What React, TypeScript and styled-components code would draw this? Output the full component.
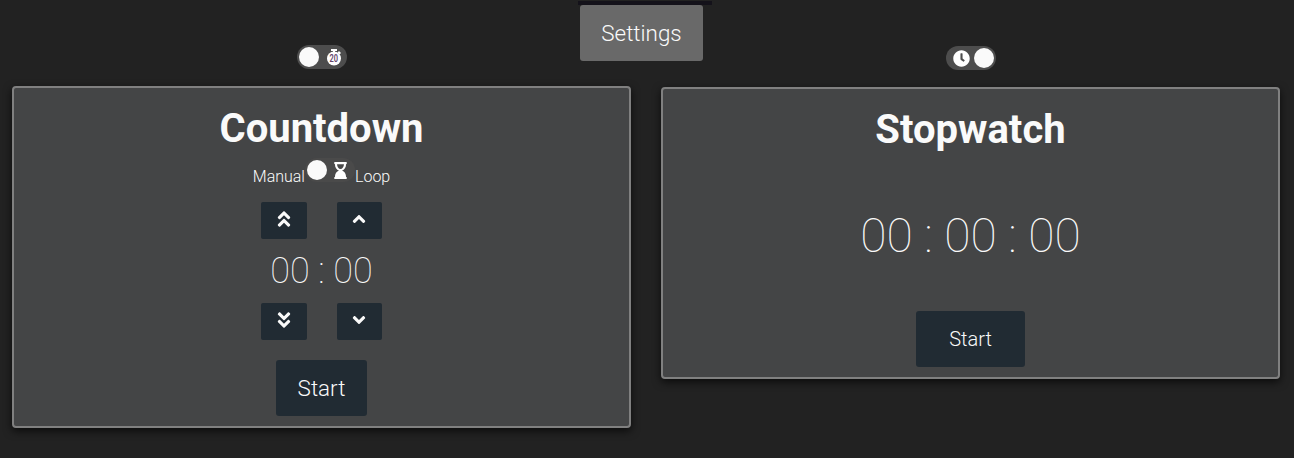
import React from "react";
import styled, { createGlobalStyle } from "styled-components";
import { FaAngleDoubleDown, FaAngleDoubleUp, FaAngleDown, FaAngleUp, FaClock, FaHourglassEnd } from "react-icons/fa";

const GlobalStyle = createGlobalStyle`
  *, *::before, *::after { box-sizing: border-box; }
  body {
    margin: 0;
    background: #222;
    color: #fafafa;
    font-family: Roboto, sans-serif;
    font-weight: 300;
    overflow: hidden;
  }
  button { font: inherit; color: inherit; border: 0; padding: 0; }
  svg { display: block; }
`;

const Page = styled.div`
  height: 458px;
  padding: 1px 14px 0 12px;
`;

const Header = styled.header`
  display: flex;
  flex-direction: column;
  height: 44px;
  width: 134px;
  margin-left: 566px;
`;

const HeaderStrip = styled.div`
  flex: none;
  height: 4px;
  background: #14121a;
`;

const SettingsButton = styled.button`
  flex: none;
  width: 123px;
  height: 56px;
  margin-left: 2px;
  border-radius: 3px;
  background: #696969;
  font-size: 22.4px;
`;

const Columns = styled.main`
  display: grid;
  grid-template-columns: 619px 619px;
  column-gap: 30px;
  align-items: start;
`;

const Column = styled.section<{ $offset?: number }>`
  display: flex;
  flex-direction: column;
  align-items: center;
  padding-top: ${(p) => p.$offset ?? 0}px;
`;

const Switch = styled.button<{ $on?: boolean; $track?: string; $inset?: number }>`
  display: flex;
  flex: none;
  flex-direction: ${(p) => (p.$on ? "row-reverse" : "row")};
  align-items: center;
  justify-content: space-between;
  width: 50px;
  height: 24px;
  padding: ${(p) => (p.$on ? `0 2px 0 ${p.$inset ?? 7}px` : `0 ${p.$inset ?? 5}px 0 2px`)};
  border-radius: 12px;
  background: ${(p) => p.$track ?? "#4d4d4d"};
`;

const Thumb = styled.span`
  width: 20px;
  height: 20px;
  border-radius: 50%;
  background: #fafafa;
`;

const Card = styled.div<{ $height: number }>`
  display: flex;
  flex-direction: column;
  align-items: center;
  width: 100%;
  height: ${(p) => p.$height}px;
  margin-top: 17px;
  padding-top: 17px;
  border: 2px solid #808080;
  border-radius: 4px;
  background: #444546;
  box-shadow: 0 3px 8px rgba(0, 0, 0, 0.7);
`;

const Title = styled.h1`
  margin: 0;
  font-size: 40px;
  font-weight: 700;
  line-height: 47px;
`;

const ModeRow = styled.div`
  display: flex;
  height: 24px;
  margin-top: 6px;
  font-size: 16px;
  line-height: 38px;
`;

const StepRow = styled.div`
  display: flex;
  gap: 30px;
`;

const StepButton = styled.button<{ $width: number }>`
  display: flex;
  align-items: center;
  justify-content: center;
  width: ${(p) => p.$width}px;
  height: 37px;
  padding: 0 ${(p) => (p.$width % 2 ? 1 : 0)}px 3px 0;
  border-radius: 2px;
  background: #212b33;
  font-size: 20px;
`;

const Spinner = styled.div`
  display: flex;
  flex-direction: column;
  align-items: center;
  margin-top: 20px;
`;

const Time = styled.div<{ $size: number; $height: number; $top?: number }>`
  padding-top: ${(p) => p.$top ?? 0}px;
  font-size: ${(p) => p.$size}px;
  font-weight: 100;
  line-height: ${(p) => p.$height}px;
  white-space: pre;
`;

const StartButton = styled.button<{ $width: number; $size: number; $gap: number }>`
  width: ${(p) => p.$width}px;
  height: 56px;
  margin-top: ${(p) => p.$gap}px;
  border-radius: 3px;
  background: #212b33;
  font-size: ${(p) => p.$size}px;
`;

const BadgeText = styled.text`
  font-family: Roboto, sans-serif;
  font-size: 10.5px;
  font-weight: 600;
  fill: #63456c;
`;

function StopwatchIcon() {
  return (
    <svg width="16" height="18" viewBox="0 0 16 18" fill="#fff">
      <path d="M5 1h6v2H9v1H7V3H5z" />
      <path d="M13 3l2 2-1.5 1.5-2-2z" />
      <circle cx="8" cy="10.500" r="7" />
      <BadgeText x="7.700" y="14.300" textAnchor="middle" textLength="8.500" lengthAdjust="spacingAndGlyphs">20</BadgeText>
    </svg>
  );
}

export default function App() {
  return (
    <>
      <GlobalStyle />
      <Page>
        <Header>
          <HeaderStrip />
          <SettingsButton>Settings</SettingsButton>
        </Header>
        <Columns>
          <Column>
            <Switch aria-label="Countdown">
              <Thumb />
              <StopwatchIcon />
            </Switch>
            <Card $height={342}>
              <Title>Countdown</Title>
              <ModeRow>
                <span>Manual</span>
                <Switch aria-label="Loop mode" $track="#4a4a4a" $inset={6}>
                  <Thumb />
                  <FaHourglassEnd size={17} color="#fff" />
                </Switch>
                <span>Loop</span>
              </ModeRow>
              <Spinner>
                <StepRow>
                  <StepButton $width={46} aria-label="Minutes up"><FaAngleDoubleUp /></StepButton>
                  <StepButton $width={45} aria-label="Seconds up"><FaAngleUp /></StepButton>
                </StepRow>
                <Time $size={36} $height={64}>00 : 00</Time>
                <StepRow>
                  <StepButton $width={46} aria-label="Minutes down"><FaAngleDoubleDown /></StepButton>
                  <StepButton $width={45} aria-label="Seconds down"><FaAngleDown /></StepButton>
                </StepRow>
              </Spinner>
              <StartButton $width={91} $size={22.4} $gap={20}>Start</StartButton>
            </Card>
          </Column>
          <Column $offset={1}>
            <Switch $on aria-label="Stopwatch">
              <Thumb />
              <FaClock size={17} color="#fff" />
            </Switch>
            <Card $height={292}>
              <Title>Stopwatch</Title>
              <Time $size={48} $height={150} $top={8}>00 : 00 : 00</Time>
              <StartButton $width={109} $size={20} $gap={0}>Start</StartButton>
            </Card>
          </Column>
        </Columns>
      </Page>
    </>
  );
}
